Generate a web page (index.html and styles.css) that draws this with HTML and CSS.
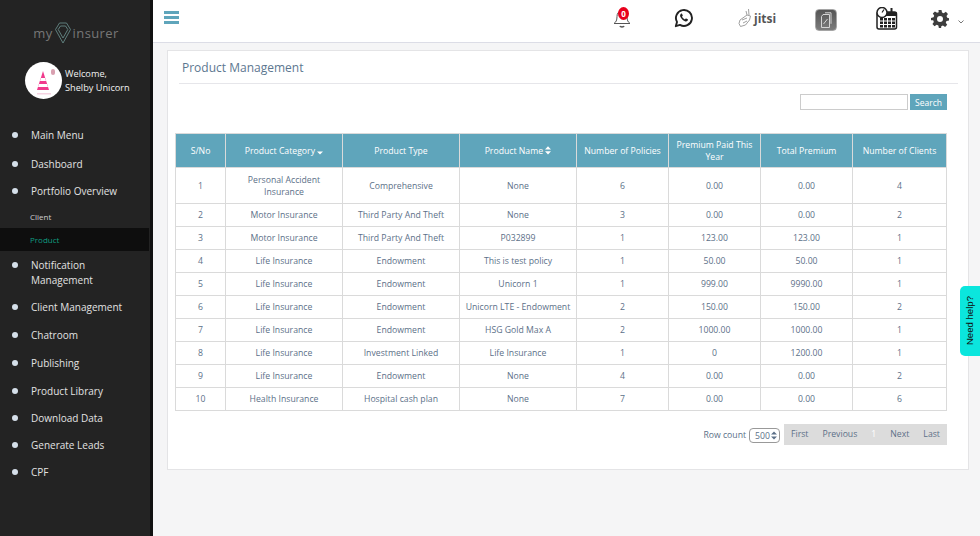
FILE: index.html
```html
<!DOCTYPE html>
<html lang="en">
<head>
<meta charset="utf-8">
<title>Product Management</title>
<link rel="stylesheet" href="styles.css">
</head>
<body>
<div class="app">
  <aside class="sidebar">
    <div class="logo">
      <span>my</span>
      <svg class="logo-gem" width="16" height="22" viewBox="0 0 16 22" fill="none" stroke="#5f7f7d" stroke-width="1">
        <path d="M4.500 1h7l4 6.500L8 21 .5 7.500z"/><path d="M5.500 4h5l2.300 3.500L8 16 3.200 7.500z"/>
      </svg>
      <span>insurer</span>
    </div>
    <div class="user">
      <div class="avatar">
        <svg width="36" height="36" viewBox="0 0 36 36">
          <path d="M17 8l6 19H11z" fill="#f03a8c"/>
          <path d="M15 15h4l1 3h-6zM13 21h8l1 3H12z" fill="#fff"/>
          <rect x="25" y="6" width="4" height="6" rx="2" fill="#d9a0b0"/>
          <rect x="11" y="30" width="14" height="1.500" fill="#f6d3e2"/>
        </svg>
      </div>
      <div class="welcome">Welcome,<br>Shelby Unicorn</div>
    </div>
    <nav class="menu">
      <a class="item i-main">Main Menu</a>
      <a class="item i-dash">Dashboard</a>
      <a class="item i-port">Portfolio Overview</a>
      <a class="sub">Client</a>
      <a class="sub active">Product</a>
      <a class="item i-notif">Notification Management</a>
      <a class="item i-cm">Client Management</a>
      <a class="item i-std">Chatroom</a>
      <a class="item i-std">Publishing</a>
      <a class="item i-low">Product Library</a>
      <a class="item i-low">Download Data</a>
      <a class="item i-low">Generate Leads</a>
      <a class="item i-low">CPF</a>
    </nav>
  </aside>
  <div class="main">
    <header class="topbar">
      <div class="burger"><i></i><i></i><i></i></div>
      <div class="tools">
        <div class="tool t-bell">
          <svg width="20" height="22" viewBox="0 0 20 22" fill="none" stroke="#555" stroke-width="1">
            <path d="M10 4c-3.500 0-5 2.500-5 5.500 0 4-1 5.500-3 7h16c-2-1.500-3-3-3-7C15 6.500 13.500 4 10 4z"/>
            <path d="M8 19c.5 1.300 3.500 1.300 4 0" stroke-width="1.600"/>
          </svg>
          <span class="badge">0</span>
        </div>
        <div class="tool t-wa">
          <svg width="20" height="20" viewBox="0 0 20 20" fill="none">
            <path d="M1.800 18.200l1.200-4.300a8 8 0 1 1 3 3z" stroke="#222" stroke-width="1.900" stroke-linejoin="round"/>
            <path d="M7 5.700c-1 .7-1.200 2-.5 3.400.9 1.900 2.400 3.400 4.400 4.100 1.400.5 2.500.2 3-.9.2-.5.100-.8-.2-1l-1.500-.8c-.3-.1-.5 0-.7.200l-.6.700c-1.300-.5-2.300-1.500-2.900-2.800l.6-.6c.2-.2.2-.4.100-.7l-.7-1.500c-.2-.3-.6-.3-1 0z" fill="#222"/>
          </svg>
        </div>
        <div class="tool t-jitsi">
          <svg width="15" height="20" viewBox="0 0 15 20" fill="none" stroke="#a0a0a0" stroke-width="1">
            <path d="M10.500 1l.5 6M8 3l1 4M2 12l7-5 3.500 1-1 4-4 5-5 1.500-1.500-3z"/><path d="M4 12l5-2M5 15l4-2"/>
          </svg>
          <span>jitsi</span>
        </div>
        <div class="tool t-doc">
          <svg width="12" height="17" viewBox="0 0 12 17" fill="none" stroke="#d4d4d4" stroke-width="1">
            <path d="M3 2.500h6.500v13h-8V4.500z"/><path d="M5 .8h6v11"/><path d="M3.500 12l4-5"/>
          </svg>
        </div>
        <div class="tool t-cal">
          <svg width="23" height="23" viewBox="0 0 23 23">
            <rect x="2" y="5" width="19.500" height="17" rx="2" fill="#fff" stroke="#222" stroke-width="1.500"/>
            <rect x="2" y="5" width="19.500" height="4" fill="#222"/>
            <g fill="#222">
              <rect x="5" y="11" width="3" height="2.500"/><rect x="9" y="11" width="3" height="2.500"/><rect x="13" y="11" width="3" height="2.500"/><rect x="17" y="11" width="3" height="2.500"/>
              <rect x="5" y="14.500" width="3" height="2.500"/><rect x="9" y="14.500" width="3" height="2.500"/><rect x="13" y="14.500" width="3" height="2.500"/><rect x="17" y="14.500" width="3" height="2.500"/>
              <rect x="5" y="18" width="3" height="2.500"/><rect x="9" y="18" width="3" height="2.500"/><rect x="13" y="18" width="3" height="2.500"/><rect x="17" y="18" width="3" height="2.500"/>
            </g>
            <circle cx="7" cy="5.500" r="5" fill="#fff" stroke="#222" stroke-width="1.500"/>
            <path d="M7 5.500L9 2.500" stroke="#222" stroke-width="1.200"/>
            <rect x="15.500" y="1" width="2" height="5" fill="#222"/>
          </svg>
        </div>
        <div class="tool t-gear">
          <svg width="18" height="18" viewBox="0 0 24 24">
            <path fill="#3d3d3d" fill-rule="evenodd" d="M10 0h4l.7 3.400 2.200.9L19.800 2.400l2.800 2.800-1.900 2.900.9 2.200L24 11v3l-3.400.7-.9 2.200 1.900 2.900-2.800 2.800-2.900-1.900-2.200.9L13.500 24h-3l-.7-3.400-2.200-.9-2.900 1.900-2.800-2.800 1.900-2.900-.9-2.200L0 13.500v-3l3.400-.7.900-2.200L2.400 4.700l2.800-2.800 2.900 1.900 2.200-.9zM12 8a4 4 0 1 0 0 8 4 4 0 0 0 0-8z"/>
          </svg>
          <svg class="caret" width="6" height="4" viewBox="0 0 6 4" fill="none" stroke="#777" stroke-width="1"><path d="M.5.500L3 3 5.500.500"/></svg>
        </div>
      </div>
    </header>
    <div class="content">
      <section class="card">
        <h1 class="title">Product Management</h1>
        <div class="search">
          <input class="search-input" type="text" aria-label="Search">
          <button class="search-btn">Search</button>
        </div>
        <table class="grid">
          <thead>
            <tr>
              <th class="c1">S/No</th>
              <th class="c2">Product Category <svg class="sort" width="6" height="4" viewBox="0 0 6 4"><path d="M0 .5h6L3 3.500z" fill="#fff"/></svg></th>
              <th class="c3">Product Type</th>
              <th class="c4">Product Name <svg class="sort" width="6" height="9" viewBox="0 0 6 9"><path d="M0 3.600h6L3 .2zM0 5.200h6L3 8.600z" fill="#fff"/></svg></th>
              <th class="c5">Number of Policies</th>
              <th class="c6">Premium Paid This Year</th>
              <th class="c7">Total Premium</th>
              <th class="c8">Number of Clients</th>
            </tr>
          </thead>
          <tbody>
            <tr class="tall"><td>1</td><td>Personal Accident Insurance</td><td>Comprehensive</td><td>None</td><td>6</td><td>0.00</td><td>0.00</td><td>4</td></tr>
            <tr><td>2</td><td>Motor Insurance</td><td>Third Party And Theft</td><td>None</td><td>3</td><td>0.00</td><td>0.00</td><td>2</td></tr>
            <tr><td>3</td><td>Motor Insurance</td><td>Third Party And Theft</td><td>P032899</td><td>1</td><td>123.00</td><td>123.00</td><td>1</td></tr>
            <tr><td>4</td><td>Life Insurance</td><td>Endowment</td><td>This is test policy</td><td>1</td><td>50.00</td><td>50.00</td><td>1</td></tr>
            <tr><td>5</td><td>Life Insurance</td><td>Endowment</td><td>Unicorn 1</td><td>1</td><td>999.00</td><td>9990.00</td><td>1</td></tr>
            <tr><td>6</td><td>Life Insurance</td><td>Endowment</td><td>Unicorn LTE - Endowment</td><td>2</td><td>150.00</td><td>150.00</td><td>2</td></tr>
            <tr><td>7</td><td>Life Insurance</td><td>Endowment</td><td>HSG Gold Max A</td><td>2</td><td>1000.00</td><td>1000.00</td><td>1</td></tr>
            <tr><td>8</td><td>Life Insurance</td><td>Investment Linked</td><td>Life Insurance</td><td>1</td><td>0</td><td>1200.00</td><td>1</td></tr>
            <tr><td>9</td><td>Life Insurance</td><td>Endowment</td><td>None</td><td>4</td><td>0.00</td><td>0.00</td><td>2</td></tr>
            <tr><td>10</td><td>Health Insurance</td><td>Hospital cash plan</td><td>None</td><td>7</td><td>0.00</td><td>0.00</td><td>6</td></tr>
          </tbody>
        </table>
        <div class="pager-row">
          <span class="row-count">Row count</span>
          <span class="select">500<svg width="6" height="9" viewBox="0 0 6 9"><path d="M0 3.600h6L3 .4zM0 5.400h6L3 8.600z" fill="#5c7088"/></svg></span>
          <div class="pager">
            <a>First</a><a>Previous</a><a class="current">1</a><a>Next</a><a>Last</a>
          </div>
        </div>
      </section>
    </div>
  </div>
</div>
<div class="help"><span>Need help?</span></div>
</body>
</html>
```
FILE: styles.css
```css
* { box-sizing: border-box; }
html, body { margin: 0; height: 100%; overflow: hidden; }
body { font-family: "Open Sans", sans-serif; background: #f5f5f6; color: #5c7088; }
a { display: block; }

.app { display: flex; height: 536px; }

.sidebar {
  width: 153px;
  flex: none;
  background: #232323;
  border-right: 3px solid #111;
  color: #eee;
}
.logo {
  display: flex;
  align-items: center;
  justify-content: center;
  height: 24px;
  margin-top: 21px;
  padding-left: 2px;
  font-size: 13px;
  letter-spacing: .4px;
  color: #777;
}
.logo-gem { margin: 0 2px; }
.user {
  display: flex;
  align-items: center;
  gap: 3px;
  margin: 17px 0 0 25px;
}
.avatar {
  width: 37px;
  height: 37px;
  border-radius: 50%;
  background: #fff;
  flex: none;
  display: flex;
  align-items: center;
  justify-content: center;
}
.welcome { font-size: 9.200px; line-height: 14px; color: #f2f2f2; }

.menu { margin-top: 29px; }
.item {
  position: relative;
  padding-left: 31px;
  padding-right: 20px;
  font-size: 10px;
  line-height: 15px;
  color: #e2e2e2;
}
.item::before {
  content: "";
  position: absolute;
  left: 12px;
  top: 4px;
  width: 6px;
  height: 6px;
  border-radius: 50%;
  background: #d5dfe9;
}
.i-main { height: 29px; }
.i-dash { height: 27px; }
.i-port { height: 21px; }
.i-notif { height: 42px; margin-top: 7px; }
.i-cm { height: 28px; }
.i-std { height: 28px; }
.i-low { height: 27px; }
.sub {
  height: 23px;
  line-height: 23px;
  padding-left: 30px;
  font-size: 8px;
  color: #d0d0d0;
}
.sub.active { background: #0e0e0e; color: #0f9d80; margin-right: 1px; }

.main { flex: 1; min-width: 0; display: flex; flex-direction: column; }
.topbar {
  height: 43px;
  flex: none;
  background: #fff;
  border-bottom: 1px solid #dcdde6;
  display: flex;
  align-items: flex-start;
}
.burger {
  width: 15px;
  margin: 11px 0 0 11px;
  display: flex;
  flex-direction: column;
  gap: 2px;
}
.burger i { display: block; height: 3px; background: #5fa5bb; }
.tools { flex: 1; display: flex; align-items: flex-start; padding-left: 433px; }
.tool { position: relative; display: flex; align-items: center; flex: none; }
.t-bell { margin-top: 7px; }
.badge {
  position: absolute;
  left: 6px;
  top: 0;
  width: 11px;
  height: 13px;
  border-radius: 50%;
  background: #e8001c;
  color: #fff;
  font-size: 8px;
  font-weight: 700;
  line-height: 13px;
  text-align: center;
}
.t-wa { margin: 8px 0 0 42px; }
.t-jitsi {
  margin: 8px 0 0 44px;
  color: #555;
  font-size: 12px;
  font-weight: 700;
  gap: 1px;
}
.t-doc {
  margin: 9px 0 0 39px;
  width: 22px;
  height: 22px;
  border-radius: 4px;
  background: linear-gradient(#555, #7c7c7c);
  border: 1px solid #a5a5a5;
  justify-content: center;
}
.t-cal { margin: 7px 0 0 38px; }
.t-gear { margin: 10px 0 0 33px; gap: 9px; }
.caret { margin-top: 5px; }

.content { padding: 7px 0 0 14px; flex: 1; }
.card {
  width: 802px;
  height: 420px;
  background: #fff;
  border: 1px solid #e4e4e6;
  padding: 0 21px 0 7px;
}
.title {
  margin: 0 -11px 0 4px;
  height: 33px;
  padding: 7px 0 0 3px;
  font-size: 12px;
  line-height: 20px;
  font-weight: 400;
  color: #5c7790;
  border-bottom: 1px solid #e6e6ea;
}
.search {
  display: flex;
  justify-content: flex-end;
  gap: 2px;
  margin-top: 10px;
  height: 16px;
}
.search-input {
  width: 108px;
  height: 16px;
  border: 1px solid #ccc;
  background: #fff;
  padding: 0;
}
.search-btn {
  width: 37px;
  height: 16px;
  border: 0;
  padding: 0;
  background: #5fa5bb;
  color: #fff;
  font: 400 8.500px "Open Sans", sans-serif;
}

.grid {
  width: 771px;
  margin-top: 23px;
  border-collapse: collapse;
  table-layout: fixed;
  font-size: 8.700px;
  text-align: center;
}
.grid th, .grid td { border: 1px solid #dadada; padding: 0 3px; }
.grid th {
  height: 34px;
  background: #5fa5bb;
  color: #fff;
  font-weight: 400;
  line-height: 12px;
}
.grid td { height: 23px; line-height: 12px; color: #5c7088; }
.grid tr.tall td { height: 36px; }
.sort { vertical-align: -1px; }
.c1 { width: 50px; }
.c2, .c3, .c4 { width: 117px; }
.c5, .c6, .c7 { width: 92px; }
.c8 { width: 94px; }

.pager-row {
  display: flex;
  justify-content: flex-end;
  align-items: flex-start;
  margin-top: 13px;
  font-size: 8.700px;
}
.row-count { margin-top: 5px; }
.select {
  display: flex;
  align-items: center;
  gap: 1px;
  height: 15px;
  margin: 4px 4px 0 3px;
  padding: 0 2px 0 5px;
  border: 1px solid #999;
  border-radius: 4px;
}
.pager {
  display: flex;
  height: 21px;
  width: 163px;
  background: #dcdcdc;
  align-items: center;
  justify-content: space-between;
  padding: 0 7px;
  color: #5c7088;
}
.pager a { line-height: 19px; }
.pager .current { color: #fff; }

.help {
  position: absolute;
  left: 960px;
  top: 286px;
  width: 20px;
  height: 70px;
  background: #0be6dd;
  border-radius: 5px 0 0 5px;
  display: flex;
  align-items: center;
  justify-content: center;
}
.help span {
  writing-mode: vertical-rl;
  transform: rotate(180deg);
  font: 9.600px/1 "Liberation Sans", sans-serif;
  color: #111;
  white-space: nowrap;
}
```
